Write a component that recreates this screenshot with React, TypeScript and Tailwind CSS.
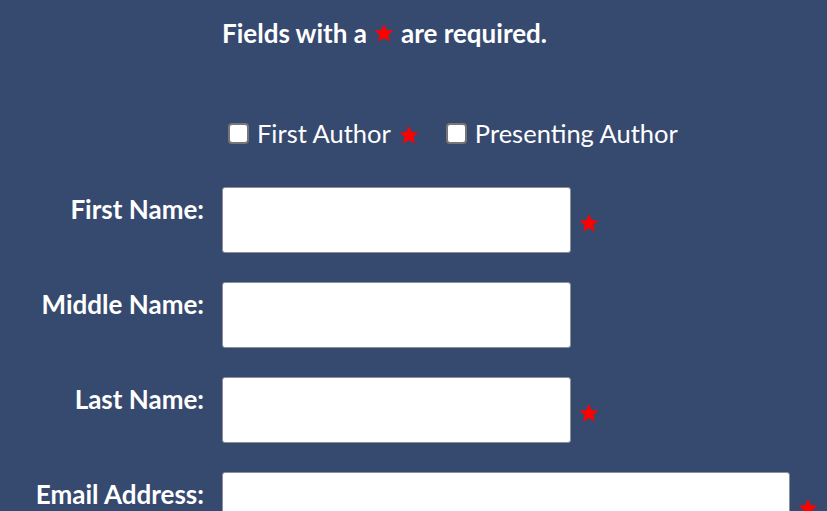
import React from 'react';

const Star = ({ className = '' }: { className?: string }) => (
  <svg viewBox="0 0 24 24" className={'w-[20px] h-[20px] shrink-0 ' + className} aria-hidden>
    <polygon fill="#ff0000" points="12,1 15.2,8.6 23.5,9 17,14.4 19.3,22.6 12,18 4.7,22.6 7,14.4 0.5,9 8.8,8.6" />
  </svg>
);

const Check = ({ label, required }: { label: string; required?: boolean }) => (
  <label className="flex items-center">
    <span className="w-[21px] h-[21px] rounded-[4px] bg-white border-2 border-[#767676] mr-2" />
    <span className="text-[25.5px] leading-[32px] text-white">{label}</span>
    {required && <Star className="ml-2 mt-1" />}
  </label>
);

const fields = [
  { label: 'First Name:', required: true, wide: false },
  { label: 'Middle Name:', required: false, wide: false },
  { label: 'Last Name:', required: true, wide: false },
  { label: 'Email Address:', required: true, wide: true },
];

export default function App() {
  return (
    <div
      className="w-[827px] h-[511px] overflow-hidden bg-[#36496f] text-white"
      style={{ fontFamily: 'Lato, "Open Sans", sans-serif' }}
    >
      {/* Header note */}
      <div className="pl-[222px] pt-[17px] flex items-center text-[26px] leading-[32px] font-bold">
        Fields with a <Star className="mx-[7px]" /> are required.
      </div>

      {/* Author checkboxes */}
      <div className="pl-[228px] mt-[68px] flex items-center gap-[27px]">
        <Check label="First Author" required />
        <Check label="Presenting Author" />
      </div>

      {/* Name fields */}
      <div className="mt-[38px] flex flex-col gap-[29px]">
        {fields.map((f) => (
          <div key={f.label} className="flex items-start">
            <div className="w-[204px] text-right text-[26px] leading-[32px] font-bold pt-[6px]">{f.label}</div>
            <div className="ml-[18px] flex items-center">
              <input
                className={
                  'h-[66px] rounded-[3px] bg-white border border-[#8a8f98] ' +
                  (f.wide ? 'w-[568px]' : 'w-[349px]')
                }
              />
              {f.required && <Star className="ml-[8px] mt-[6px]" />}
            </div>
          </div>
        ))}
      </div>
    </div>
  );
}
